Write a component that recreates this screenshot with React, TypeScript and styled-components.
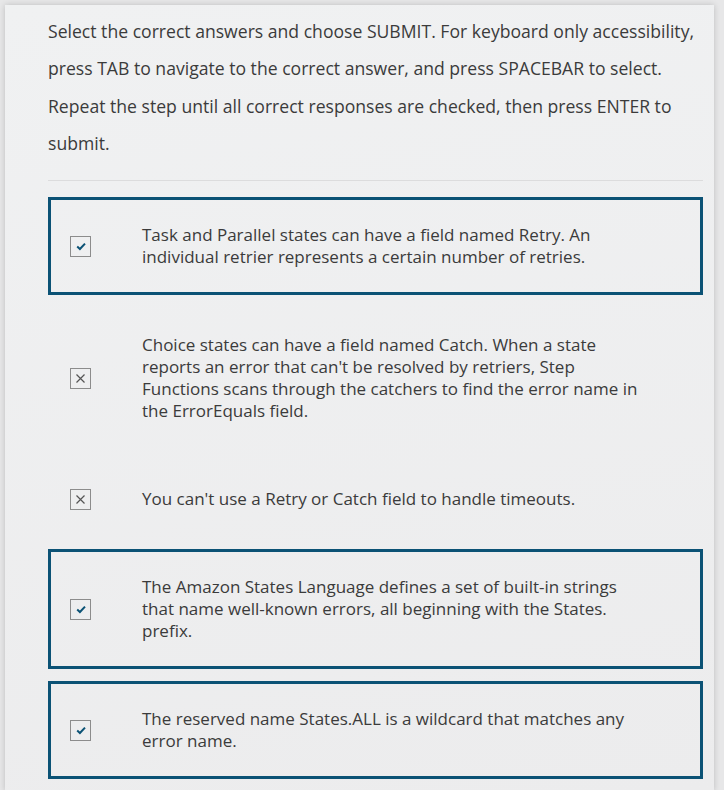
import styled, { createGlobalStyle } from "styled-components";

const GlobalStyle = createGlobalStyle`
  html, body {
    margin: 0;
    padding: 0;
    background-color: #e7e7e8;
  }
  body {
    font-family: "Open Sans", "Noto Sans", Lato, sans-serif;
    color: #3b3b3b;
  }
`;

const Card = styled.div`
  margin: 5px 10px 0 5px;
  min-height: 785px;
  box-sizing: border-box;
  background: linear-gradient(170deg, #f0f1f2 0%, #ececed 100%);
  box-shadow: 0 0 6px rgba(0, 0, 0, 0.18);
  padding: 8px 0 12px 43px;
`;

const Intro = styled.p`
  margin: 0;
  font-size: 17.6px;
  line-height: 37.3px;
  width: 666px;
`;

const Divider = styled.hr`
  border: none;
  border-top: 1px solid #dcdcdd;
  margin: 18px 0 16px 0;
  width: 655px;
`;

const OptionList = styled.div`
  display: flex;
  flex-direction: column;
  gap: 12px;
  width: 655px;
`;

const Option = styled.label<{ $selected: boolean }>`
  display: flex;
  align-items: center;
  border: 3px solid ${(p) => (p.$selected ? "#0b5275" : "transparent")};
  padding: 24px 52px 24px 19px;
  cursor: pointer;
`;

const Box = styled.span`
  flex: 0 0 auto;
  width: 21px;
  height: 21px;
  box-sizing: border-box;
  border: 1.5px solid #8c8c8c;
  display: flex;
  align-items: center;
  justify-content: center;
  margin-right: 51px;
`;

const OptionText = styled.span`
  font-size: 17px;
  line-height: 22px;
  color: #3b3b3b;
`;

const CheckIcon = () => (
  <svg width="12" height="10" viewBox="0 0 12 10">
    <path d="M2.2 5.6 L4.9 8 L10 2.6" fill="none" stroke="#0b5275" strokeWidth="2" />
  </svg>
);

const CrossIcon = () => (
  <svg width="11" height="11" viewBox="0 0 11 11">
    <path d="M1.5 1.5 L9.5 9.5 M9.5 1.5 L1.5 9.5" fill="none" stroke="#555" strokeWidth="1.2" />
  </svg>
);

const options = [
  {
    text: "Task and Parallel states can have a field named Retry. An individual retrier represents a certain number of retries.",
    selected: true,
  },
  {
    text: "Choice states can have a field named Catch. When a state reports an error that can't be resolved by retriers, Step Functions scans through the catchers to find the error name in the ErrorEquals field.",
    selected: false,
  },
  {
    text: "You can't use a Retry or Catch field to handle timeouts.",
    selected: false,
  },
  {
    text: "The Amazon States Language defines a set of built-in strings that name well-known errors, all beginning with the States. prefix.",
    selected: true,
  },
  {
    text: "The reserved name States.ALL is a wildcard that matches any error name.",
    selected: true,
  },
];

const App = () => {
  return (
    <>
      <GlobalStyle />
      <Card>
        <Intro>
          Select the correct answers and choose SUBMIT. For keyboard only accessibility, press TAB to
          navigate to the correct answer, and press SPACEBAR to select. Repeat the step until all
          correct responses are checked, then press ENTER to submit.
        </Intro>
        <Divider />
        <OptionList>
          {options.map((o, i) => (
            <Option key={i} $selected={o.selected}>
              <Box>{o.selected ? <CheckIcon /> : <CrossIcon />}</Box>
              <OptionText>{o.text}</OptionText>
            </Option>
          ))}
        </OptionList>
      </Card>
    </>
  );
};

export default App;
